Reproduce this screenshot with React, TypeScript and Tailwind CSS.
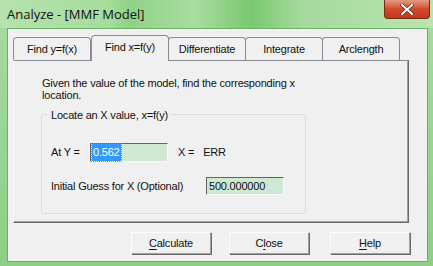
import React from 'react';

const tabs = ['Find y=f(x)', 'Find x=f(y)', 'Differentiate', 'Integrate', 'Arclength'];

function Tab({ label, active }: { label: string; active?: boolean }) {
    if (active) {
        return (
            <div className="relative z-10 -mb-px flex h-[26px] w-[78px] items-center justify-center rounded-t-[4px] border border-b-0 border-[#898c95] bg-[#f0f0f0] pb-[2px]">
                {label}
            </div>
        );
    }
    return (
        <div className="flex h-[23px] w-[78px] items-center justify-center rounded-t-[4px] border border-b-0 border-[#898c95] bg-[#f0f0f0] -ml-px first:ml-0">
            {label}
        </div>
    );
}

function Button({ u, rest, before = '', className = '' }: { u: string; rest: string; before?: string; className?: string }) {
    return (
        <div className={`flex h-[22px] w-[80px] items-center justify-center border border-t-[#fdfdfd] border-l-[#fdfdfd] border-r-[#a0a0a0] border-b-[#a0a0a0] bg-[#f0f0f0] shadow-[1px_1px_0_#696969] ${className}`}>
            <span>
                {before}
                <span className="underline underline-offset-2">{u}</span>
                {rest}
            </span>
        </div>
    );
}

export default function App() {
    return (
        <div
            className="flex h-[266px] w-[433px] flex-col overflow-hidden bg-gradient-to-b from-[#a6dca0] to-[#8ccf85] text-[11px] tracking-[-0.2px] text-[#111]"
            style={{ fontFamily: '"Liberation Sans", Arial, sans-serif' }}
        >
            {/* Title bar */}
            <div className="flex h-[28px] shrink-0 items-start bg-[linear-gradient(90deg,#b6e2ae_0%,#a5dc9c_25%,#8fd386_30%,#a9dca1_45%,#79c96f_58%,#a6da9e_70%,#b9e4b1_100%)]">
                <div
                    className="ml-[7px] mt-[5px] text-[13px] tracking-normal text-[#111]"
                    style={{ fontFamily: '"Open Sans", "Noto Sans", sans-serif' }}
                >
                    Analyze - [MMF Model]
                </div>
                <div className="ml-auto mr-[3px] flex h-[19px] w-[46px] items-center justify-center rounded-b-[4px] border border-t-0 border-[#7a2a1c] bg-gradient-to-b from-[#e39a84] via-[#cf4a2a] to-[#c23a1c]">
                    <svg width="14" height="11" viewBox="0 0 14 11">
                        <path d="M2 1 L12 10 M12 1 L2 10" stroke="#5b2a20" strokeWidth="3.4" strokeLinecap="square" />
                        <path d="M2 1 L12 10 M12 1 L2 10" stroke="#ffffff" strokeWidth="2" strokeLinecap="square" />
                    </svg>
                </div>
            </div>

            {/* Client area */}
            <div className="ml-[7px] mr-[5px] mb-[4px] flex flex-1 flex-col border border-[#6ab163] bg-[#f0f0f0]">
                <div className="ml-[5px] mt-[6px] flex items-end">
                    {tabs.map((t, i) => (
                        <Tab key={t} label={t} active={i === 1} />
                    ))}
                </div>
                <div className="ml-[5px] h-[163px] w-[396px] border border-t-[#898c95] border-l-[#fdfdfd] border-r-[#696969] border-b-[#696969] bg-[#f0f0f0] shadow-[inset_-1px_-1px_0_#a0a0a0]">
                    <div className="ml-[28px] mt-[16px] w-[262px] leading-[12px]">
                        Given the value of the model, find the corresponding x location.
                    </div>

                    {/* Group box */}
                    <div className="relative ml-[27px] mt-[13px] h-[100px] w-[265px] rounded-[2px] border border-[#d5dfe5]">
                        <div className="absolute -top-[8px] left-[7px] bg-[#f0f0f0] px-[2px]">Locate an X value, x=f(y)</div>
                        <div className="ml-[9px] mt-[28px] flex items-center">
                            <span className="w-[39px]">At Y =</span>
                            <div className="flex h-[19px] w-[78px] items-center border border-t-[#646464] border-l-[#646464] border-r-[#f8f8f8] border-b-[#f8f8f8] bg-[#cfe8d2] pl-[1px]">
                                <span className="bg-[#3399ff] px-[1px] text-white outline outline-1 outline-dotted outline-[#c08040]">0.562</span>
                            </div>
                            <span className="ml-[10px]">X =</span>
                            <span className="ml-[9px]">ERR</span>
                        </div>
                        <div className="ml-[9px] mt-[15px] flex items-center">
                            <span className="w-[155px]">Initial Guess for X (Optional)</span>
                            <div className="flex h-[18px] w-[78px] items-center border border-t-[#646464] border-l-[#646464] border-r-[#f8f8f8] border-b-[#f8f8f8] bg-[#cfe8d2] pl-[2px]">
                                500.000000
                            </div>
                        </div>
                    </div>
                </div>

                {/* Buttons */}
                <div className="ml-[123px] mt-[9px] flex">
                    <Button u="C" rest="alculate" />
                    <Button before="C" u="l" rest="ose" className="ml-[18px]" />
                    <Button u="H" rest="elp" className="ml-[21px]" />
                </div>
            </div>
        </div>
    );
}
